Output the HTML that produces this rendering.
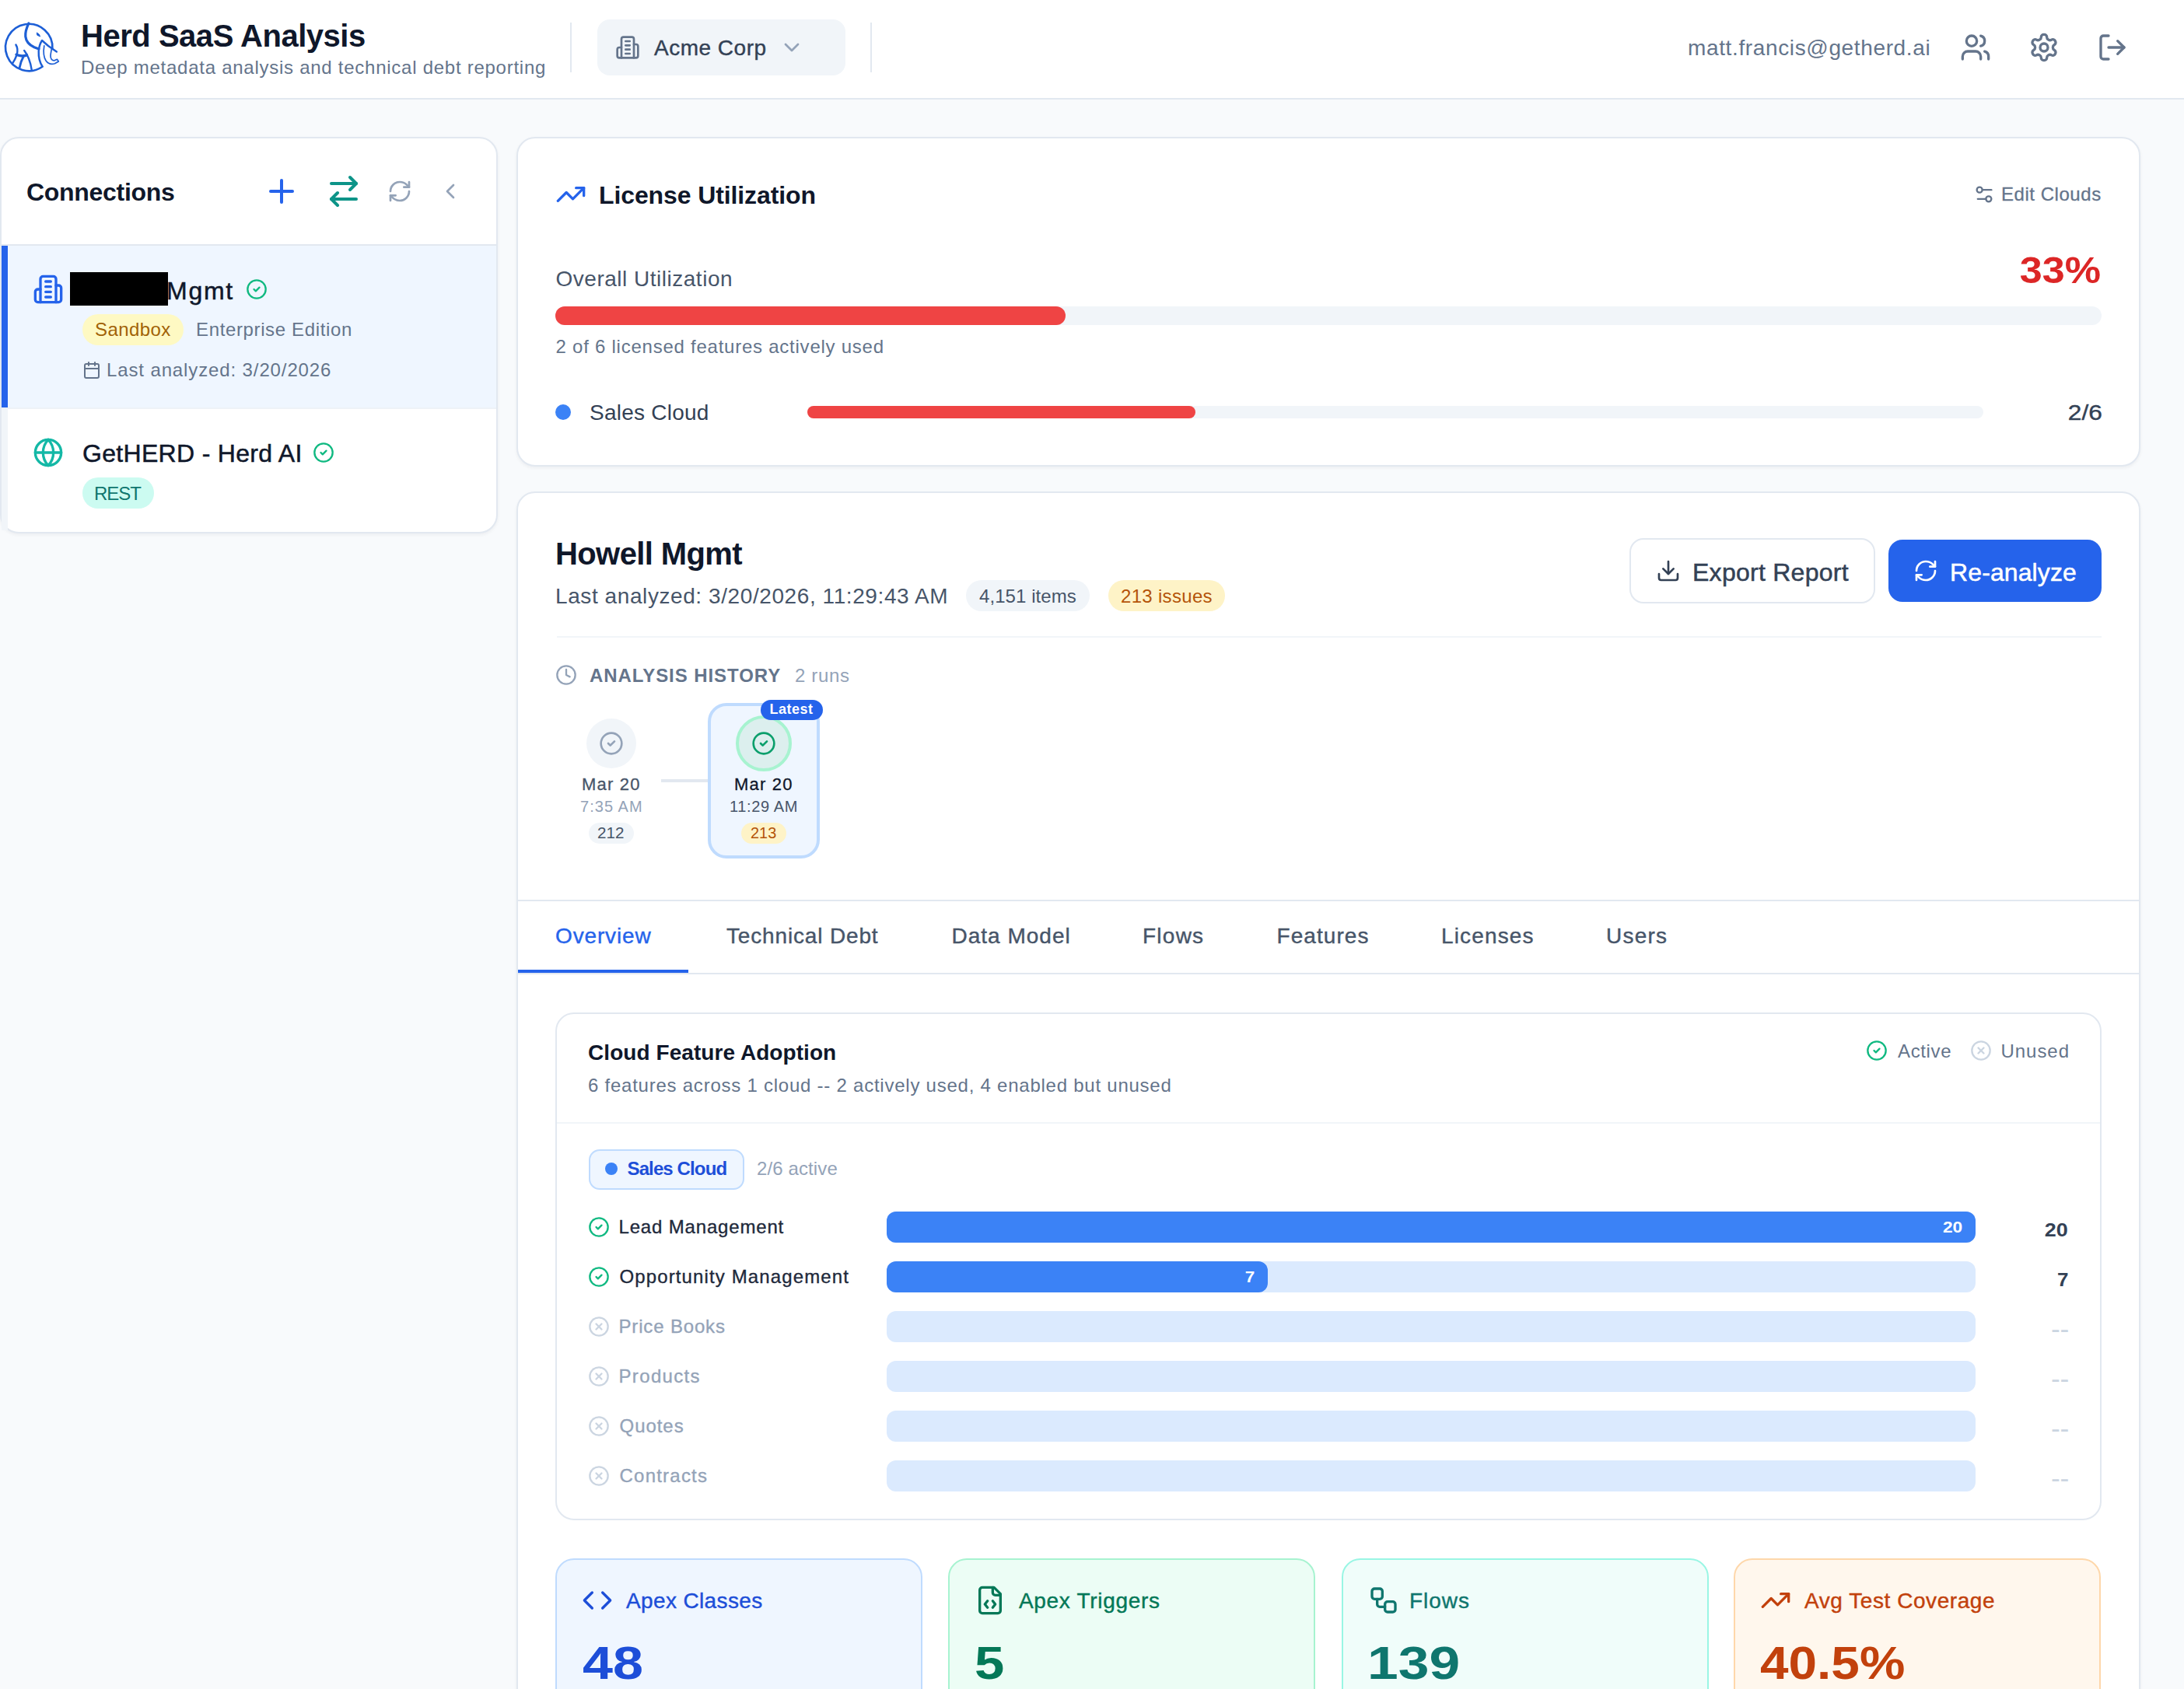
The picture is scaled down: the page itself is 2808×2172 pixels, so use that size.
<!DOCTYPE html>
<html><head><meta charset="utf-8"><title>Herd SaaS Analysis</title>
<style>
html,body{margin:0;padding:0;width:2808px;height:2172px;overflow:hidden;}
body{background:#f8fafc;font-family:"Liberation Sans", sans-serif;}
.root{position:relative;width:2808px;height:2172px;overflow:hidden;}
</style></head><body><div class="root">
<div style="position:absolute;left:0px;top:0px;width:2808px;height:126px;background:#fff;"></div>
<div style="position:absolute;left:0px;top:126px;width:2808px;height:2px;background:#e2e8f0;"></div>
<svg style="position:absolute;left:0;top:20px" width="85" height="80" viewBox="0 0 85 80" fill="none" stroke="#1d5fd6" stroke-linecap="round" stroke-linejoin="round">
<path d="M54.5 65.8 A30.2 30.2 0 1 1 67.4 43" stroke-width="2.6"/>
<path d="M36.9 10 C34 16 32.3 22 32.8 27 C33.5 33 38 38 44 40.8 L50 43" stroke-width="3.2"/>
<path d="M47.6 22.2 L50.2 24 L51.6 27 L48 25.3 Z" fill="#1d5fd6" stroke-width="1"/>
<path d="M72.8 46.5 L62 39 L54 32 C51.5 36 50 41 49.7 46 C49.4 53 51 60 54.5 65.5" stroke-width="2.4"/>
<path d="M56.8 38.8 C55.6 46 56 53 59 58 C62 62.3 66.5 63 70.5 61.8 L75.3 59 L73.4 56.3 L70 57.8 C66.8 58 64.8 55.5 65 51.5 C65.2 48 66 45.5 66.2 43.5" stroke-width="1.7"/>
<path d="M20.4 37.5 C22.6 41 22.8 46 21.6 50.5 C20 55 17.8 59 16.3 61.1" stroke-width="2.4"/>
<path d="M21 50.3 C25.5 52.3 30 52.5 34.5 50.8" stroke-width="3.4"/>
<path d="M31.2 45 C35.5 50.5 39 59 40.7 69.6" stroke-width="2.4"/>
<path d="M30 53 C27.5 57.5 26 62 25.1 67.2" stroke-width="2.8"/>
</svg>
<div id="t1" style="position:absolute;left:104.00px;top:26.23px;font-size:40px;line-height:40px;color:#0f172a;font-weight:700;white-space:nowrap;letter-spacing:-0.471px;">Herd SaaS Analysis</div>
<div id="t2" style="position:absolute;left:104.00px;top:74.68px;font-size:24px;line-height:24px;color:#64748b;font-weight:400;white-space:nowrap;letter-spacing:0.740px;">Deep metadata analysis and technical debt reporting</div>
<div style="position:absolute;left:733px;top:29px;width:2px;height:64px;background:#e2e8f0;"></div>
<div style="position:absolute;left:768px;top:25px;width:319px;height:72px;background:#f1f5f9;border-radius:16px;"></div>
<svg style="position:absolute;left:791.00px;top:44.70px;" width="32" height="32" viewBox="0 0 24 24" fill="none" stroke="#64748b" stroke-width="2" stroke-linecap="round" stroke-linejoin="round"><path d="M6 22V4a2 2 0 0 1 2-2h8a2 2 0 0 1 2 2v18Z"/><path d="M6 12H4a2 2 0 0 0-2 2v6a2 2 0 0 0 2 2h2"/><path d="M18 9h2a2 2 0 0 1 2 2v9a2 2 0 0 1-2 2h-2"/><path d="M10 6h4"/><path d="M10 10h4"/><path d="M10 14h4"/><path d="M10 18h4"/></svg>
<div id="t3" style="position:absolute;left:841.00px;top:47.69px;font-size:28px;line-height:28px;color:#334155;font-weight:400;white-space:nowrap;letter-spacing:0.500px;-webkit-text-stroke:0.4px #334155;">Acme Corp</div>
<svg style="position:absolute;left:1002.00px;top:45.00px;" width="32" height="32" viewBox="0 0 24 24" fill="none" stroke="#94a3b8" stroke-width="2" stroke-linecap="round" stroke-linejoin="round"><path d="m6 9 6 6 6-6"/></svg>
<div style="position:absolute;left:1119px;top:29px;width:2px;height:64px;background:#e2e8f0;"></div>
<div id="t4" style="position:absolute;left:2170.00px;top:48.09px;font-size:28px;line-height:28px;color:#64748b;font-weight:400;white-space:nowrap;letter-spacing:0.636px;">matt.francis@getherd.ai</div>
<svg style="position:absolute;left:2520.00px;top:41.00px;" width="40" height="40" viewBox="0 0 24 24" fill="none" stroke="#64748b" stroke-width="2" stroke-linecap="round" stroke-linejoin="round"><path d="M16 21v-2a4 4 0 0 0-4-4H6a4 4 0 0 0-4 4v2"/><circle cx="9" cy="7" r="4"/><path d="M22 21v-2a4 4 0 0 0-3-3.87"/><path d="M16 3.13a4 4 0 0 1 0 7.75"/></svg>
<svg style="position:absolute;left:2608.00px;top:41.00px;" width="40" height="40" viewBox="0 0 24 24" fill="none" stroke="#64748b" stroke-width="2" stroke-linecap="round" stroke-linejoin="round"><path d="M12.22 2h-.44a2 2 0 0 0-2 2v.18a2 2 0 0 1-1 1.73l-.43.25a2 2 0 0 1-2 0l-.15-.08a2 2 0 0 0-2.73.73l-.22.38a2 2 0 0 0 .73 2.73l.15.1a2 2 0 0 1 1 1.72v.51a2 2 0 0 1-1 1.74l-.15.09a2 2 0 0 0-.73 2.73l.22.38a2 2 0 0 0 2.73.73l.15-.08a2 2 0 0 1 2 0l.43.25a2 2 0 0 1 1 1.73V20a2 2 0 0 0 2 2h.44a2 2 0 0 0 2-2v-.18a2 2 0 0 1 1-1.73l.43-.25a2 2 0 0 1 2 0l.15.08a2 2 0 0 0 2.73-.73l.22-.39a2 2 0 0 0-.73-2.73l-.15-.08a2 2 0 0 1-1-1.74v-.5a2 2 0 0 1 1-1.74l.15-.09a2 2 0 0 0 .73-2.73l-.22-.38a2 2 0 0 0-2.73-.73l-.15.08a2 2 0 0 1-2 0l-.43-.25a2 2 0 0 1-1-1.73V4a2 2 0 0 0-2-2z"/><circle cx="12" cy="12" r="3"/></svg>
<svg style="position:absolute;left:2696.00px;top:41.00px;" width="40" height="40" viewBox="0 0 24 24" fill="none" stroke="#64748b" stroke-width="2" stroke-linecap="round" stroke-linejoin="round"><path d="M9 21H5a2 2 0 0 1-2-2V5a2 2 0 0 1 2-2h4"/><polyline points="16 17 21 12 16 7"/><line x1="21" x2="9" y1="12" y2="12"/></svg>
<div style="position:absolute;left:0px;top:176px;width:636px;height:506px;background:#fff;border:2px solid #e2e8f0;border-radius:24px;box-shadow:0 2px 4px rgba(15,23,42,0.05);overflow:hidden;"></div>
<div id="t5" style="position:absolute;left:34.00px;top:231.41px;font-size:32px;line-height:32px;color:#0f172a;font-weight:700;white-space:nowrap;letter-spacing:-0.300px;">Connections</div>
<svg style="position:absolute;left:338.00px;top:222.00px;" width="48" height="48" viewBox="0 0 24 24" fill="none" stroke="#2563eb" stroke-width="2" stroke-linecap="round" stroke-linejoin="round"><path d="M5 12h14"/><path d="M12 5v14"/></svg>
<svg style="position:absolute;left:418.00px;top:222.00px;" width="48" height="48" viewBox="0 0 24 24" fill="none" stroke="#0d9488" stroke-width="2" stroke-linecap="round" stroke-linejoin="round"><path d="m16 3 4 4-4 4"/><path d="M20 7H4"/><path d="m8 21-4-4 4-4"/><path d="M4 17h16"/></svg>
<svg style="position:absolute;left:498.00px;top:230.00px;" width="32" height="32" viewBox="0 0 24 24" fill="none" stroke="#94a3b8" stroke-width="2" stroke-linecap="round" stroke-linejoin="round"><path d="M3 12a9 9 0 0 1 9-9 9.75 9.75 0 0 1 6.74 2.74L21 8"/><path d="M21 3v5h-5"/><path d="M21 12a9 9 0 0 1-9 9 9.75 9.75 0 0 1-6.74-2.74L3 16"/><path d="M8 16H3v5"/></svg>
<svg style="position:absolute;left:563.00px;top:230.00px;" width="32" height="32" viewBox="0 0 24 24" fill="none" stroke="#94a3b8" stroke-width="2" stroke-linecap="round" stroke-linejoin="round"><path d="m15 18-6-6 6-6"/></svg>
<div style="position:absolute;left:2px;top:314px;width:636px;height:2px;background:#e2e8f0;"></div>
<div style="position:absolute;left:2px;top:316px;width:636px;height:208px;background:#eff6ff;"></div>
<div style="position:absolute;left:2px;top:316px;width:8px;height:208px;background:#2563eb;"></div>
<div style="position:absolute;left:2px;top:524px;width:636px;height:2px;background:#eef2f7;"></div>
<svg style="position:absolute;left:42.00px;top:352.00px;" width="40" height="40" viewBox="0 0 24 24" fill="none" stroke="#2563eb" stroke-width="2" stroke-linecap="round" stroke-linejoin="round"><path d="M6 22V4a2 2 0 0 1 2-2h8a2 2 0 0 1 2 2v18Z"/><path d="M6 12H4a2 2 0 0 0-2 2v6a2 2 0 0 0 2 2h2"/><path d="M18 9h2a2 2 0 0 1 2 2v9a2 2 0 0 1-2 2h-2"/><path d="M10 6h4"/><path d="M10 10h4"/><path d="M10 14h4"/><path d="M10 18h4"/></svg>
<div style="position:absolute;left:90px;top:350px;width:126px;height:43px;background:#000;"></div>
<div id="t6" style="position:absolute;left:214.00px;top:357.61px;font-size:32px;line-height:32px;color:#0f172a;font-weight:400;white-space:nowrap;letter-spacing:1.733px;-webkit-text-stroke:0.5px #0f172a;">Mgmt</div>
<svg style="position:absolute;left:316.00px;top:358.00px;" width="28" height="28" viewBox="0 0 24 24" fill="none" stroke="#10b981" stroke-width="2" stroke-linecap="round" stroke-linejoin="round"><circle cx="12" cy="12" r="10"/><path d="m9 12 2 2 4-4"/></svg>
<div style="position:absolute;left:106px;top:404px;width:130px;height:40px;background:#fef9c3;border-radius:20px;"></div>
<div id="t7" style="position:absolute;left:122.00px;top:412.28px;font-size:24px;line-height:24px;color:#a16207;font-weight:400;white-space:nowrap;letter-spacing:0.433px;">Sandbox</div>
<div id="t8" style="position:absolute;left:252.00px;top:412.28px;font-size:24px;line-height:24px;color:#64748b;font-weight:400;white-space:nowrap;letter-spacing:0.635px;">Enterprise Edition</div>
<svg style="position:absolute;left:106.00px;top:464.00px;" width="24" height="24" viewBox="0 0 24 24" fill="none" stroke="#64748b" stroke-width="2" stroke-linecap="round" stroke-linejoin="round"><rect width="18" height="18" x="3" y="4" rx="2"/><path d="M16 2v4"/><path d="M8 2v4"/><path d="M3 10h18"/></svg>
<div id="t9" style="position:absolute;left:137.00px;top:464.38px;font-size:24px;line-height:24px;color:#64748b;font-weight:400;white-space:nowrap;letter-spacing:0.878px;">Last analyzed: 3/20/2026</div>
<div style="position:absolute;left:2px;top:526px;width:8px;height:156px;background:#f1f5f9;"></div>
<svg style="position:absolute;left:42.00px;top:562.00px;" width="40" height="40" viewBox="0 0 24 24" fill="none" stroke="#14b8a6" stroke-width="2" stroke-linecap="round" stroke-linejoin="round"><circle cx="12" cy="12" r="10"/><path d="M12 2a14.5 14.5 0 0 0 0 20 14.5 14.5 0 0 0 0-20"/><path d="M2 12h20"/></svg>
<div id="t10" style="position:absolute;left:106.00px;top:566.91px;font-size:32px;line-height:32px;color:#0f172a;font-weight:400;white-space:nowrap;letter-spacing:0.312px;-webkit-text-stroke:0.5px #0f172a;">GetHERD - Herd AI</div>
<svg style="position:absolute;left:401.70px;top:568.00px;" width="28" height="28" viewBox="0 0 24 24" fill="none" stroke="#10b981" stroke-width="2" stroke-linecap="round" stroke-linejoin="round"><circle cx="12" cy="12" r="10"/><path d="m9 12 2 2 4-4"/></svg>
<div style="position:absolute;left:106px;top:614px;width:92px;height:40px;background:#ccfbf1;border-radius:20px;"></div>
<div id="t11" style="position:absolute;left:121.00px;top:623.38px;font-size:24px;line-height:24px;color:#0f766e;font-weight:400;white-space:nowrap;letter-spacing:-1.067px;">REST</div>
<div style="position:absolute;left:664px;top:176px;width:2084px;height:420px;background:#fff;border:2px solid #e2e8f0;border-radius:24px;box-shadow:0 2px 4px rgba(15,23,42,0.05);"></div>
<svg style="position:absolute;left:714.00px;top:230.00px;" width="40" height="40" viewBox="0 0 24 24" fill="none" stroke="#2563eb" stroke-width="2" stroke-linecap="round" stroke-linejoin="round"><polyline points="22 7 13.5 15.5 8.5 10.5 2 17"/><polyline points="16 7 22 7 22 13"/></svg>
<div id="t12" style="position:absolute;left:770.00px;top:234.71px;font-size:32px;line-height:32px;color:#0f172a;font-weight:700;white-space:nowrap;letter-spacing:-0.111px;">License Utilization</div>
<svg style="position:absolute;left:2537.00px;top:236.00px;" width="28" height="28" viewBox="0 0 24 24" fill="none" stroke="#64748b" stroke-width="2" stroke-linecap="round" stroke-linejoin="round"><path d="M20 7h-9"/><path d="M14 17H5"/><circle cx="17" cy="17" r="3"/><circle cx="7" cy="7" r="3"/></svg>
<div id="t13" style="position:absolute;left:2573.00px;top:238.38px;font-size:24px;line-height:24px;color:#64748b;font-weight:400;white-space:nowrap;letter-spacing:0.540px;-webkit-text-stroke:0.3px #64748b;">Edit Clouds</div>
<div id="t14" style="position:absolute;left:714.50px;top:344.59px;font-size:28px;line-height:28px;color:#475569;font-weight:400;white-space:nowrap;letter-spacing:0.511px;">Overall Utilization</div>
<div id="t15" style="position:absolute;right:107.00px;top:323.56px;font-size:48px;line-height:48px;color:#dc2626;font-weight:700;white-space:nowrap;letter-spacing:0.000px;transform:scaleX(1.0851);transform-origin:right center;">33%</div>
<div style="position:absolute;left:714px;top:394px;width:1988px;height:24px;background:#f1f5f9;border-radius:12px;"></div>
<div style="position:absolute;left:714px;top:394px;width:656px;height:24px;background:#ef4444;border-radius:12px;"></div>
<div id="t16" style="position:absolute;left:714.50px;top:434.28px;font-size:24px;line-height:24px;color:#64748b;font-weight:400;white-space:nowrap;letter-spacing:0.757px;">2 of 6 licensed features actively used</div>
<div style="position:absolute;left:714px;top:520px;width:20px;height:20px;background:#3b82f6;border-radius:50%;"></div>
<div id="t17" style="position:absolute;left:758.00px;top:516.59px;font-size:28px;line-height:28px;color:#334155;font-weight:400;white-space:nowrap;letter-spacing:0.240px;">Sales Cloud</div>
<div style="position:absolute;left:1038px;top:522px;width:1512px;height:16px;background:#f1f5f9;border-radius:8px;"></div>
<div style="position:absolute;left:1038px;top:522px;width:499px;height:16px;background:#ef4444;border-radius:8px;"></div>
<div id="t18" style="position:absolute;right:105.00px;top:516.59px;font-size:28px;line-height:28px;color:#334155;font-weight:400;white-space:nowrap;letter-spacing:0.000px;-webkit-text-stroke:0.4px #334155;transform:scaleX(1.1319);transform-origin:right center;">2/6</div>
<div style="position:absolute;left:664px;top:632px;width:2084px;height:1700px;background:#fff;border:2px solid #e2e8f0;border-radius:24px;box-shadow:0 2px 4px rgba(15,23,42,0.05);"></div>
<div id="t19" style="position:absolute;left:714.00px;top:691.53px;font-size:40px;line-height:40px;color:#0f172a;font-weight:700;white-space:nowrap;letter-spacing:-0.600px;">Howell Mgmt</div>
<div id="t20" style="position:absolute;left:714.00px;top:752.79px;font-size:28px;line-height:28px;color:#475569;font-weight:400;white-space:nowrap;letter-spacing:0.583px;">Last analyzed: 3/20/2026, 11:29:43 AM</div>
<div style="position:absolute;left:1242px;top:746px;width:159px;height:40px;background:#f1f5f9;border-radius:20px;"></div>
<div id="t21" style="position:absolute;left:1259.00px;top:754.58px;font-size:24px;line-height:24px;color:#475569;font-weight:400;white-space:nowrap;letter-spacing:0.080px;">4,151 items</div>
<div style="position:absolute;left:1425px;top:746px;width:150px;height:40px;background:#fef3c7;border-radius:20px;"></div>
<div id="t22" style="position:absolute;left:1441.00px;top:754.58px;font-size:24px;line-height:24px;color:#b45309;font-weight:400;white-space:nowrap;letter-spacing:0.311px;">213 issues</div>
<div style="position:absolute;left:2095px;top:692px;width:312px;height:80px;background:#fff;border:2px solid #e2e8f0;border-radius:18px;"></div>
<svg style="position:absolute;left:2128.70px;top:717.70px;" width="32" height="32" viewBox="0 0 24 24" fill="none" stroke="#334155" stroke-width="2" stroke-linecap="round" stroke-linejoin="round"><path d="M21 15v4a2 2 0 0 1-2 2H5a2 2 0 0 1-2-2v-4"/><polyline points="7 10 12 15 17 10"/><line x1="12" x2="12" y1="15" y2="3"/></svg>
<div id="t23" style="position:absolute;left:2176.00px;top:719.81px;font-size:32px;line-height:32px;color:#334155;font-weight:400;white-space:nowrap;letter-spacing:0.267px;-webkit-text-stroke:0.5px #334155;">Export Report</div>
<div style="position:absolute;left:2428px;top:694px;width:274px;height:80px;background:#2563eb;border-radius:18px;"></div>
<svg style="position:absolute;left:2459.80px;top:718.00px;" width="32" height="32" viewBox="0 0 24 24" fill="none" stroke="#fff" stroke-width="2" stroke-linecap="round" stroke-linejoin="round"><path d="M3 12a9 9 0 0 1 9-9 9.75 9.75 0 0 1 6.74 2.74L21 8"/><path d="M21 3v5h-5"/><path d="M21 12a9 9 0 0 1-9 9 9.75 9.75 0 0 1-6.74-2.74L3 16"/><path d="M8 16H3v5"/></svg>
<div id="t24" style="position:absolute;left:2507.00px;top:719.81px;font-size:32px;line-height:32px;color:#fff;font-weight:400;white-space:nowrap;letter-spacing:0.111px;-webkit-text-stroke:0.5px #fff;">Re-analyze</div>
<div style="position:absolute;left:716px;top:818px;width:1986px;height:2px;background:#f1f5f9;"></div>
<svg style="position:absolute;left:714.00px;top:854.00px;" width="28" height="28" viewBox="0 0 24 24" fill="none" stroke="#94a3b8" stroke-width="2" stroke-linecap="round" stroke-linejoin="round"><circle cx="12" cy="12" r="10"/><polyline points="12 6 12 12 16 14"/></svg>
<div id="t25" style="position:absolute;left:758.00px;top:856.88px;font-size:24px;line-height:24px;color:#64748b;font-weight:700;white-space:nowrap;letter-spacing:0.933px;">ANALYSIS HISTORY</div>
<div id="t26" style="position:absolute;left:1022.00px;top:856.88px;font-size:24px;line-height:24px;color:#94a3b8;font-weight:400;white-space:nowrap;letter-spacing:0.640px;">2 runs</div>
<div style="position:absolute;left:754px;top:924px;width:64px;height:64px;background:#f1f5f9;border-radius:50%;"></div>
<svg style="position:absolute;left:770.00px;top:940.00px;" width="32" height="32" viewBox="0 0 24 24" fill="none" stroke="#94a3b8" stroke-width="2" stroke-linecap="round" stroke-linejoin="round"><circle cx="12" cy="12" r="10"/><path d="m9 12 2 2 4-4"/></svg>
<div id="t27" style="position:absolute;left:748.00px;top:997.77px;font-size:22px;line-height:22px;color:#475569;font-weight:400;white-space:nowrap;letter-spacing:1.200px;-webkit-text-stroke:0.3px #475569;">Mar 20</div>
<div id="t28" style="position:absolute;left:746.00px;top:1026.77px;font-size:20px;line-height:20px;color:#94a3b8;font-weight:400;white-space:nowrap;letter-spacing:1.033px;">7:35 AM</div>
<div style="position:absolute;left:757px;top:1057.5px;width:58px;height:27px;background:#f1f5f9;border-radius:14px;"></div>
<div id="t29" style="position:absolute;left:768.00px;top:1060.67px;font-size:20px;line-height:20px;color:#475569;font-weight:400;white-space:nowrap;letter-spacing:0.000px;transform:scaleX(1.0312);transform-origin:left center;">212</div>
<div style="position:absolute;left:850px;top:1002px;width:61px;height:4px;background:#e2e8f0;"></div>
<div style="position:absolute;left:910px;top:904px;width:144px;height:200px;background:#eff6ff;border:4px solid #bfdbfe;border-radius:24px;box-sizing:border-box;"></div>
<div style="position:absolute;left:946px;top:920px;width:72px;height:72px;background:#dcefee;border:4px solid #a7f3d0;border-radius:50%;box-sizing:border-box;"></div>
<svg style="position:absolute;left:966.00px;top:940.00px;" width="32" height="32" viewBox="0 0 24 24" fill="none" stroke="#0b9f6c" stroke-width="2" stroke-linecap="round" stroke-linejoin="round"><circle cx="12" cy="12" r="10"/><path d="m9 12 2 2 4-4"/></svg>
<div style="position:absolute;left:978px;top:900px;width:80px;height:26px;background:#2563eb;border-radius:13px;"></div>
<div id="t30" style="position:absolute;left:989.50px;top:903.46px;font-size:18px;line-height:18px;color:#fff;font-weight:700;white-space:nowrap;letter-spacing:0.520px;">Latest</div>
<div id="t31" style="position:absolute;left:944.00px;top:997.77px;font-size:22px;line-height:22px;color:#0f172a;font-weight:400;white-space:nowrap;letter-spacing:1.200px;-webkit-text-stroke:0.3px #0f172a;">Mar 20</div>
<div id="t32" style="position:absolute;left:938.00px;top:1026.77px;font-size:20px;line-height:20px;color:#475569;font-weight:400;white-space:nowrap;letter-spacing:0.629px;">11:29 AM</div>
<div style="position:absolute;left:953px;top:1057.5px;width:58px;height:27px;background:#fef3c7;border-radius:14px;"></div>
<div id="t33" style="position:absolute;left:964.90px;top:1060.67px;font-size:20px;line-height:20px;color:#b45309;font-weight:400;white-space:nowrap;letter-spacing:0.000px;transform:scaleX(0.9951);transform-origin:left center;">213</div>
<div style="position:absolute;left:666px;top:1157px;width:2084px;height:2px;background:#e2e8f0;"></div>
<div style="position:absolute;left:666px;top:1251px;width:2084px;height:2px;background:#e2e8f0;"></div>
<div style="position:absolute;left:666px;top:1247px;width:219px;height:4px;background:#2563eb;"></div>
<div id="t34" style="position:absolute;left:714.00px;top:1190.09px;font-size:28px;line-height:28px;color:#2563eb;font-weight:400;white-space:nowrap;letter-spacing:0.857px;-webkit-text-stroke:0.4px #2563eb;">Overview</div>
<div id="t35" style="position:absolute;left:934.00px;top:1190.09px;font-size:28px;line-height:28px;color:#475569;font-weight:400;white-space:nowrap;letter-spacing:0.846px;-webkit-text-stroke:0.4px #475569;">Technical Debt</div>
<div id="t36" style="position:absolute;left:1223.50px;top:1190.09px;font-size:28px;line-height:28px;color:#475569;font-weight:400;white-space:nowrap;letter-spacing:1.000px;-webkit-text-stroke:0.4px #475569;">Data Model</div>
<div id="t37" style="position:absolute;left:1469.00px;top:1190.09px;font-size:28px;line-height:28px;color:#475569;font-weight:400;white-space:nowrap;letter-spacing:1.250px;-webkit-text-stroke:0.4px #475569;">Flows</div>
<div id="t38" style="position:absolute;left:1641.50px;top:1190.09px;font-size:28px;line-height:28px;color:#475569;font-weight:400;white-space:nowrap;letter-spacing:1.057px;-webkit-text-stroke:0.4px #475569;">Features</div>
<div id="t39" style="position:absolute;left:1853.00px;top:1190.09px;font-size:28px;line-height:28px;color:#475569;font-weight:400;white-space:nowrap;letter-spacing:1.143px;-webkit-text-stroke:0.4px #475569;">Licenses</div>
<div id="t40" style="position:absolute;left:2065.00px;top:1190.09px;font-size:28px;line-height:28px;color:#475569;font-weight:400;white-space:nowrap;letter-spacing:1.250px;-webkit-text-stroke:0.4px #475569;">Users</div>
<div style="position:absolute;left:714px;top:1302px;width:1988px;height:653px;background:#fff;border:2px solid #e2e8f0;border-radius:24px;box-sizing:border-box;"></div>
<div id="t41" style="position:absolute;left:756.00px;top:1340.29px;font-size:28px;line-height:28px;color:#0f172a;font-weight:700;white-space:nowrap;letter-spacing:0.067px;">Cloud Feature Adoption</div>
<div id="t42" style="position:absolute;left:756.00px;top:1383.68px;font-size:24px;line-height:24px;color:#64748b;font-weight:400;white-space:nowrap;letter-spacing:0.760px;">6 features across 1 cloud -- 2 actively used, 4 enabled but unused</div>
<svg style="position:absolute;left:2399.00px;top:1336.70px;" width="28" height="28" viewBox="0 0 24 24" fill="none" stroke="#10b981" stroke-width="2" stroke-linecap="round" stroke-linejoin="round"><circle cx="12" cy="12" r="10"/><path d="m9 12 2 2 4-4"/></svg>
<div id="t43" style="position:absolute;left:2440.00px;top:1340.28px;font-size:24px;line-height:24px;color:#64748b;font-weight:400;white-space:nowrap;letter-spacing:0.640px;">Active</div>
<svg style="position:absolute;left:2532.70px;top:1336.70px;" width="28" height="28" viewBox="0 0 24 24" fill="none" stroke="#cbd5e1" stroke-width="2" stroke-linecap="round" stroke-linejoin="round"><circle cx="12" cy="12" r="10"/><path d="m15 9-6 6"/><path d="m9 9 6 6"/></svg>
<div id="t44" style="position:absolute;left:2572.50px;top:1340.28px;font-size:24px;line-height:24px;color:#64748b;font-weight:400;white-space:nowrap;letter-spacing:0.960px;">Unused</div>
<div style="position:absolute;left:716px;top:1443px;width:1984px;height:2px;background:#f1f5f9;"></div>
<div style="position:absolute;left:756.7px;top:1477.5px;width:200px;height:52px;background:#eff6ff;border:2px solid #bfdbfe;border-radius:14px;box-sizing:border-box;"></div>
<div style="position:absolute;left:778px;top:1495px;width:16px;height:16px;background:#3b82f6;border-radius:50%;"></div>
<div id="t45" style="position:absolute;left:806.50px;top:1490.68px;font-size:24px;line-height:24px;color:#1d4ed8;font-weight:700;white-space:nowrap;letter-spacing:-0.880px;">Sales Cloud</div>
<div id="t46" style="position:absolute;left:973.00px;top:1490.68px;font-size:24px;line-height:24px;color:#94a3b8;font-weight:400;white-space:nowrap;letter-spacing:0.111px;">2/6 active</div>
<svg style="position:absolute;left:756.00px;top:1563.70px;" width="28" height="28" viewBox="0 0 24 24" fill="none" stroke="#10b981" stroke-width="2" stroke-linecap="round" stroke-linejoin="round"><circle cx="12" cy="12" r="10"/><path d="m9 12 2 2 4-4"/></svg>
<div id="t47" style="position:absolute;left:795.50px;top:1566.38px;font-size:24px;line-height:24px;color:#1e293b;font-weight:400;white-space:nowrap;letter-spacing:0.829px;-webkit-text-stroke:0.35px #1e293b;">Lead Management</div>
<div style="position:absolute;left:1140px;top:1558px;width:1400px;height:40px;background:#dbeafe;border-radius:12px;"></div>
<div style="position:absolute;left:1140px;top:1558px;width:1400px;height:40px;background:#3b82f6;border-radius:12px;"></div>
<div id="t48" style="position:absolute;right:284.50px;top:1568.37px;font-size:20px;line-height:20px;color:#fff;font-weight:700;white-space:nowrap;letter-spacing:0.000px;transform:scaleX(1.1364);transform-origin:right center;">20</div>
<div id="t49" style="position:absolute;right:149.00px;top:1569.68px;font-size:24px;line-height:24px;color:#334155;font-weight:700;white-space:nowrap;letter-spacing:0.000px;transform:scaleX(1.1237);transform-origin:right center;">20</div>
<svg style="position:absolute;left:756.00px;top:1627.70px;" width="28" height="28" viewBox="0 0 24 24" fill="none" stroke="#10b981" stroke-width="2" stroke-linecap="round" stroke-linejoin="round"><circle cx="12" cy="12" r="10"/><path d="m9 12 2 2 4-4"/></svg>
<div id="t50" style="position:absolute;left:796.50px;top:1630.38px;font-size:24px;line-height:24px;color:#1e293b;font-weight:400;white-space:nowrap;letter-spacing:1.124px;-webkit-text-stroke:0.35px #1e293b;">Opportunity Management</div>
<div style="position:absolute;left:1140px;top:1622px;width:1400px;height:40px;background:#dbeafe;border-radius:12px;"></div>
<div style="position:absolute;left:1140px;top:1622px;width:490px;height:40px;background:#3b82f6;border-radius:12px;"></div>
<div id="t51" style="position:absolute;right:1194.50px;top:1632.37px;font-size:20px;line-height:20px;color:#fff;font-weight:700;white-space:nowrap;letter-spacing:0.000px;transform:scaleX(1.1229);transform-origin:right center;">7</div>
<div id="t52" style="position:absolute;right:149.00px;top:1633.68px;font-size:24px;line-height:24px;color:#334155;font-weight:700;white-space:nowrap;letter-spacing:0.000px;transform:scaleX(1.0833);transform-origin:right center;">7</div>
<svg style="position:absolute;left:756.00px;top:1691.70px;" width="28" height="28" viewBox="0 0 24 24" fill="none" stroke="#cbd5e1" stroke-width="2" stroke-linecap="round" stroke-linejoin="round"><circle cx="12" cy="12" r="10"/><path d="m15 9-6 6"/><path d="m9 9 6 6"/></svg>
<div id="t53" style="position:absolute;left:795.50px;top:1694.38px;font-size:24px;line-height:24px;color:#94a3b8;font-weight:400;white-space:nowrap;letter-spacing:0.840px;-webkit-text-stroke:0.35px #94a3b8;">Price Books</div>
<div style="position:absolute;left:1140px;top:1686px;width:1400px;height:40px;background:#dbeafe;border-radius:12px;"></div>
<div id="t54" style="position:absolute;right:148.00px;top:1697.68px;font-size:24px;line-height:24px;color:#cbd5e1;font-weight:700;white-space:nowrap;letter-spacing:0.000px;transform:scaleX(1.4148);transform-origin:right center;">--</div>
<svg style="position:absolute;left:756.00px;top:1755.70px;" width="28" height="28" viewBox="0 0 24 24" fill="none" stroke="#cbd5e1" stroke-width="2" stroke-linecap="round" stroke-linejoin="round"><circle cx="12" cy="12" r="10"/><path d="m15 9-6 6"/><path d="m9 9 6 6"/></svg>
<div id="t55" style="position:absolute;left:795.50px;top:1758.38px;font-size:24px;line-height:24px;color:#94a3b8;font-weight:400;white-space:nowrap;letter-spacing:1.343px;-webkit-text-stroke:0.35px #94a3b8;">Products</div>
<div style="position:absolute;left:1140px;top:1750px;width:1400px;height:40px;background:#dbeafe;border-radius:12px;"></div>
<div id="t56" style="position:absolute;right:148.00px;top:1761.68px;font-size:24px;line-height:24px;color:#cbd5e1;font-weight:700;white-space:nowrap;letter-spacing:0.000px;transform:scaleX(1.4148);transform-origin:right center;">--</div>
<svg style="position:absolute;left:756.00px;top:1819.70px;" width="28" height="28" viewBox="0 0 24 24" fill="none" stroke="#cbd5e1" stroke-width="2" stroke-linecap="round" stroke-linejoin="round"><circle cx="12" cy="12" r="10"/><path d="m15 9-6 6"/><path d="m9 9 6 6"/></svg>
<div id="t57" style="position:absolute;left:796.50px;top:1822.38px;font-size:24px;line-height:24px;color:#94a3b8;font-weight:400;white-space:nowrap;letter-spacing:0.960px;-webkit-text-stroke:0.35px #94a3b8;">Quotes</div>
<div style="position:absolute;left:1140px;top:1814px;width:1400px;height:40px;background:#dbeafe;border-radius:12px;"></div>
<div id="t58" style="position:absolute;right:148.00px;top:1825.68px;font-size:24px;line-height:24px;color:#cbd5e1;font-weight:700;white-space:nowrap;letter-spacing:0.000px;transform:scaleX(1.4148);transform-origin:right center;">--</div>
<svg style="position:absolute;left:756.00px;top:1883.70px;" width="28" height="28" viewBox="0 0 24 24" fill="none" stroke="#cbd5e1" stroke-width="2" stroke-linecap="round" stroke-linejoin="round"><circle cx="12" cy="12" r="10"/><path d="m15 9-6 6"/><path d="m9 9 6 6"/></svg>
<div id="t59" style="position:absolute;left:796.50px;top:1886.38px;font-size:24px;line-height:24px;color:#94a3b8;font-weight:400;white-space:nowrap;letter-spacing:1.225px;-webkit-text-stroke:0.35px #94a3b8;">Contracts</div>
<div style="position:absolute;left:1140px;top:1878px;width:1400px;height:40px;background:#dbeafe;border-radius:12px;"></div>
<div id="t60" style="position:absolute;right:148.00px;top:1889.68px;font-size:24px;line-height:24px;color:#cbd5e1;font-weight:700;white-space:nowrap;letter-spacing:0.000px;transform:scaleX(1.4148);transform-origin:right center;">--</div>
<div style="position:absolute;left:714px;top:2004px;width:472px;height:400px;background:#eff6ff;border:2px solid #bfdbfe;border-radius:24px;box-sizing:border-box;"></div>
<svg style="position:absolute;left:748.00px;top:2038.00px;" width="40" height="40" viewBox="0 0 24 24" fill="none" stroke="#1d4ed8" stroke-width="2" stroke-linecap="round" stroke-linejoin="round"><polyline points="16 18 22 12 16 6"/><polyline points="8 6 2 12 8 18"/></svg>
<div id="t61" style="position:absolute;left:805.00px;top:2045.29px;font-size:28px;line-height:28px;color:#1d4ed8;font-weight:400;white-space:nowrap;letter-spacing:0.364px;-webkit-text-stroke:0.4px #1d4ed8;">Apex Classes</div>
<div id="t62" style="position:absolute;left:748.50px;top:2109.20px;font-size:60px;line-height:60px;color:#1d4ed8;font-weight:700;white-space:nowrap;letter-spacing:0.000px;transform:scaleX(1.1693);transform-origin:left center;">48</div>
<div style="position:absolute;left:1219px;top:2004px;width:472px;height:400px;background:#ecfdf5;border:2px solid #a7f3d0;border-radius:24px;box-sizing:border-box;"></div>
<svg style="position:absolute;left:1253.00px;top:2038.00px;" width="40" height="40" viewBox="0 0 24 24" fill="none" stroke="#047857" stroke-width="2" stroke-linecap="round" stroke-linejoin="round"><path d="M10 12.5 8 15l2 2.5"/><path d="m14 12.5 2 2.5-2 2.5"/><path d="M14 2v4a2 2 0 0 0 2 2h4"/><path d="M15 2H6a2 2 0 0 0-2 2v16a2 2 0 0 0 2 2h12a2 2 0 0 0 2-2V7z"/></svg>
<div id="t63" style="position:absolute;left:1310.00px;top:2045.29px;font-size:28px;line-height:28px;color:#047857;font-weight:400;white-space:nowrap;letter-spacing:0.683px;-webkit-text-stroke:0.4px #047857;">Apex Triggers</div>
<div id="t64" style="position:absolute;left:1253.40px;top:2109.20px;font-size:60px;line-height:60px;color:#047857;font-weight:700;white-space:nowrap;letter-spacing:0.000px;transform:scaleX(1.1473);transform-origin:left center;">5</div>
<div style="position:absolute;left:1725px;top:2004px;width:472px;height:400px;background:#f0fdfa;border:2px solid #99f6e4;border-radius:24px;box-sizing:border-box;"></div>
<svg style="position:absolute;left:1759.00px;top:2038.00px;" width="40" height="40" viewBox="0 0 24 24" fill="none" stroke="#0f766e" stroke-width="2" stroke-linecap="round" stroke-linejoin="round"><rect width="8" height="8" x="3" y="3" rx="2"/><path d="M7 11v4a2 2 0 0 0 2 2h4"/><rect width="8" height="8" x="13" y="13" rx="2"/></svg>
<div id="t65" style="position:absolute;left:1812.00px;top:2045.29px;font-size:28px;line-height:28px;color:#0f766e;font-weight:400;white-space:nowrap;letter-spacing:0.950px;-webkit-text-stroke:0.4px #0f766e;">Flows</div>
<div id="t66" style="position:absolute;left:1758.00px;top:2109.20px;font-size:60px;line-height:60px;color:#0f766e;font-weight:700;white-space:nowrap;letter-spacing:0.000px;transform:scaleX(1.1895);transform-origin:left center;">139</div>
<div style="position:absolute;left:2229px;top:2004px;width:472px;height:400px;background:#fff7ed;border:2px solid #fed7aa;border-radius:24px;box-sizing:border-box;"></div>
<svg style="position:absolute;left:2263.00px;top:2038.00px;" width="40" height="40" viewBox="0 0 24 24" fill="none" stroke="#c2410c" stroke-width="2" stroke-linecap="round" stroke-linejoin="round"><polyline points="22 7 13.5 15.5 8.5 10.5 2 17"/><polyline points="16 7 22 7 22 13"/></svg>
<div id="t67" style="position:absolute;left:2320.00px;top:2045.29px;font-size:28px;line-height:28px;color:#c2410c;font-weight:400;white-space:nowrap;letter-spacing:0.562px;-webkit-text-stroke:0.4px #c2410c;">Avg Test Coverage</div>
<div id="t68" style="position:absolute;left:2263.00px;top:2109.20px;font-size:60px;line-height:60px;color:#c2410c;font-weight:700;white-space:nowrap;letter-spacing:0.000px;transform:scaleX(1.0952);transform-origin:left center;">40.5%</div>
</div></body></html>
